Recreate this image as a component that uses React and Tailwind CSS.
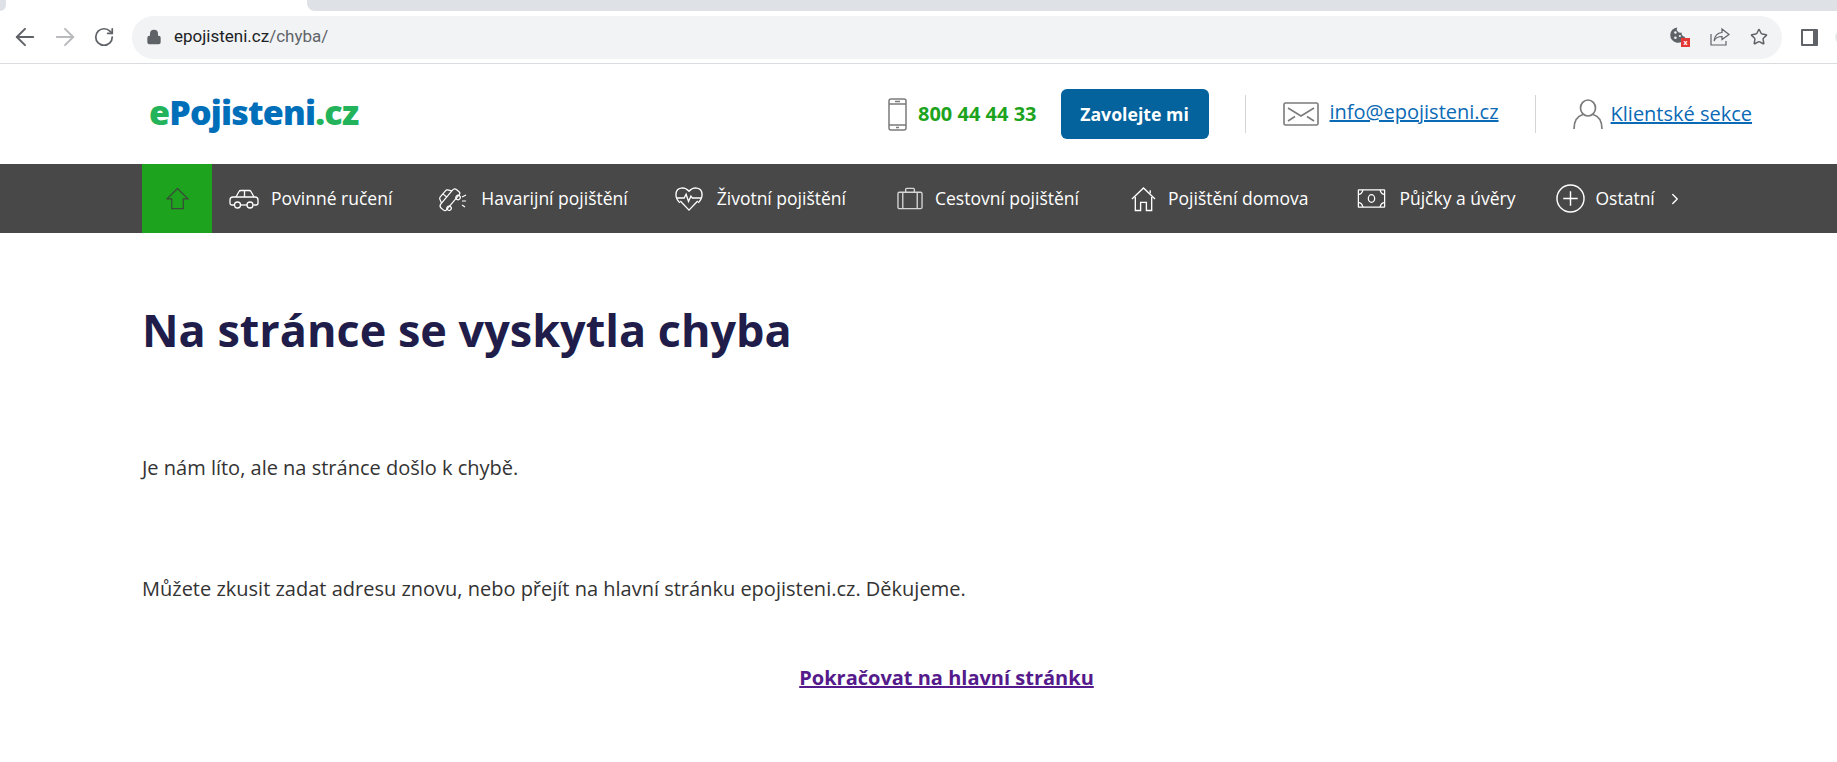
import { ArrowLeft, ArrowRight, ChevronRight, Lock, RotateCw, Star } from 'lucide-react'

const NAV_ITEMS = [
  { label: 'Povinné ručení', icon: CarIcon, margin: 'ml-[17px]', gap: 'ml-[12px]' },
  { label: 'Havarijní pojištění', icon: CrashIcon, margin: 'ml-[46px]', gap: 'ml-[14px]' },
  { label: 'Životní pojištění', icon: HeartIcon, margin: 'ml-[47px]', gap: 'ml-[14px]' },
  { label: 'Cestovní pojištění', icon: CaseIcon, margin: 'ml-[51px]', gap: 'ml-[12px]' },
  { label: 'Pojištění domova', icon: HouseIcon, margin: 'ml-[52px]', gap: 'ml-[12px]' },
  { label: 'Půjčky a úvěry', icon: MoneyIcon, margin: 'ml-[49px]', gap: 'ml-[13px]' },
  { label: 'Ostatní', icon: PlusIcon, margin: 'ml-[41px]', gap: 'ml-[10px]' },
]

function CarIcon() {
  return (
    <svg viewBox="0 0 30 20" className="h-[20px] w-[30px]" fill="none" stroke="currentColor" strokeWidth="1.3">
      <path d="M7 8 L10 2.5 Q10.5 1.5 12 1.5 H20 Q21.5 1.5 22 2.5 L25 8" />
      <path d="M15.5 1.5 V8" />
      <path d="M5.5 16 H3 Q1 16 1 14 V11 Q1 8 4 8 H26 Q29 8 29 11 V14 Q29 16 27 16 H24.5" />
      <path d="M12 16 H18" />
      <circle cx="8.5" cy="16" r="3" />
      <circle cx="21" cy="16" r="3" />
    </svg>
  )
}

function CrashIcon() {
  return (
    <svg viewBox="0 0 29 28" className="h-[28px] w-[29px]" fill="none" stroke="currentColor" strokeWidth="1.2">
      <g transform="rotate(-50 11 14)">
        <path d="M-1 14 Q-1 11 2 11 H20 Q23 11 23 14 V17 Q23 19 21 19 H1 Q-1 19 -1 17 Z" />
        <path d="M3 11 L5 7 Q5.5 6 7 6 H15 Q16.5 6 17 7 L19 11" />
        <path d="M11 6 V11" />
        <circle cx="4" cy="20" r="2.2" />
        <circle cx="18" cy="20" r="2.2" />
      </g>
      <path d="M24 12 L28 10 M24 16 H28 M24 20 L27 22" />
    </svg>
  )
}

function HeartIcon() {
  return (
    <svg viewBox="0 0 29 26" className="h-[26px] w-[28px]" fill="none" stroke="currentColor" strokeWidth="1.4">
      <path d="M5 17 Q1 13 1 8.5 Q1 2 7.5 1.5 Q11.5 1.5 14.5 5 Q17.5 1.5 21.5 1.5 Q28 2 28 8.5 Q28 13 24 17" />
      <path d="M5.5 15 L14.5 24.5 L23.5 15" />
      <path d="M2 12 H9.5 L11.5 8 L14 15.5 L16.5 10 L18 12 H27" />
    </svg>
  )
}

function CaseIcon() {
  return (
    <svg viewBox="0 0 27 23" className="h-[23px] w-[26px]" fill="none" stroke="#d6d6d6" strokeWidth="1.4">
      <rect x="1" y="5" width="25" height="17" rx="1.5" />
      <path d="M6 5 V22 M21 5 V22" />
      <path d="M9 5 V2 Q9 1 10 1 H17 Q18 1 18 2 V5" />
    </svg>
  )
}

function HouseIcon() {
  return (
    <svg viewBox="0 0 26 26" className="h-[26px] w-[25px]" fill="none" stroke="currentColor" strokeWidth="1.4">
      <path d="M1 13 L13 1.5 L25 13" />
      <path d="M20 4 V7" />
      <path d="M4.5 11 V25 H10 V16.5 H16 V25 H21.5 V11" />
    </svg>
  )
}

function MoneyIcon() {
  return (
    <svg viewBox="0 0 31 21" className="h-[19px] w-[29px]" fill="none" stroke="currentColor" strokeWidth="1.4">
      <rect x="1" y="1" width="29" height="19" rx="0.5" />
      <ellipse cx="15.5" cy="10.5" rx="3.5" ry="4.2" />
      <path d="M1 6 Q5 6 6 1 M30 6 Q26 6 25 1 M1 15 Q5 15 6 20 M30 15 Q26 15 25 20" />
    </svg>
  )
}

function PlusIcon() {
  return (
    <svg viewBox="0 0 30 30" className="h-[29px] w-[29px]" fill="none" stroke="currentColor" strokeWidth="1.5">
      <circle cx="15" cy="15" r="14" />
      <path d="M15 7.5 V22.5 M7.5 15 H22.5" />
    </svg>
  )
}

function HomeOutline() {
  return (
    <svg viewBox="0 0 24 24" className="h-[23px] w-[23px]" fill="none" stroke="#3a4a3a" strokeWidth="1.3">
      <path d="M12 1.5 L23 12.5 H18 V22.5 H6 V12.5 H1 Z" />
    </svg>
  )
}

function PhoneIcon() {
  return (
    <svg viewBox="0 0 19 33" className="h-[33px] w-[19px]" fill="none" stroke="#7b7b7b" strokeWidth="1.5">
      <rect x="1" y="1" width="17" height="31" rx="2" />
      <path d="M1 6 H18 M1 27 H18" />
      <path d="M7 3.5 H12 M8 29.5 H11" />
    </svg>
  )
}

function MailIcon() {
  return (
    <svg viewBox="0 0 36 24" className="h-[24px] w-[36px]" fill="none" stroke="#7b7b7b" strokeWidth="1.6">
      <rect x="1" y="1" width="34" height="22" rx="1.5" />
      <path d="M5 6 L18 14 L31 6" />
      <path d="M5 19 L12 14.5 M31 19 L24 14.5" />
    </svg>
  )
}

function UserIcon() {
  return (
    <svg viewBox="0 0 30 30" className="h-[30px] w-[30px]" fill="none" stroke="#7b7b7b" strokeWidth="1.7">
      <ellipse cx="15" cy="9" rx="7.5" ry="8" />
      <path d="M1 30 Q1 18 10 15.5 M29 30 Q29 18 20 15.5" />
    </svg>
  )
}

function CookieIcon() {
  return (
    <div className="relative h-[20px] w-[20px]">
      <svg viewBox="0 0 20 20" className="h-[18px] w-[18px]" fill="#5f6368">
        <path d="M8 0.5 A8.5 8.5 0 1 0 17 11 A4 4 0 0 1 13 6 A4 4 0 0 1 8 0.5 Z" />
        <circle cx="6" cy="6" r="1.4" fill="#f1f3f4" />
        <circle cx="6" cy="12" r="1.4" fill="#f1f3f4" />
        <circle cx="11" cy="10" r="1.2" fill="#f1f3f4" />
      </svg>
      <span className="absolute bottom-0 right-0 flex h-[9px] w-[9px] items-center justify-center bg-[#e53935] text-[7px] font-bold leading-none text-white">
        x
      </span>
    </div>
  )
}

function ShareIcon() {
  return (
    <svg viewBox="0 0 20 20" className="h-[20px] w-[20px]" fill="none" stroke="#5f6368" strokeWidth="1.2">
      <path d="M1 7 V18 H16 V14" />
      <path d="M12 2 L19 7.5 L12 12.5 V9.5 Q6 9.5 4 14 Q5 6 12 5.5 Z" />
    </svg>
  )
}

function BrowserBar() {
  return (
    <div className="h-[64px] w-full bg-white">
      <div className="flex h-[11px] w-full">
        <div className="h-full w-[6px] rounded-br-[6px] bg-[#dee1e6]" />
        <div className="ml-[301px] h-full flex-1 rounded-bl-[8px] bg-[#dee1e6]" />
      </div>
      <div className="flex h-[53px] items-center border-b-[1px] border-[#dadce0]">
        <ArrowLeft className="ml-[11px] h-[28px] w-[28px] shrink-0 text-[#5f6368]" strokeWidth={1.7} />
        <ArrowRight className="ml-[12px] h-[28px] w-[28px] shrink-0 text-[#b8babd]" strokeWidth={1.7} />
        <RotateCw className="ml-[14px] h-[22px] w-[22px] shrink-0 text-[#5f6368]" strokeWidth={1.9} />
        <div className="ml-[17px] flex h-[43px] w-[1650px] shrink-0 items-center rounded-full bg-[#f1f3f4] pl-[14px] pr-[14px]">
          <Lock className="h-[16px] w-[16px] fill-[#5f6368] text-[#5f6368]" strokeWidth={2} />
          <span className="ml-[12px] font-['Roboto',sans-serif] text-[17px] text-[#202124]">
            epojisteni.cz<span className="text-[#5f6368]">/chyba/</span>
          </span>
          <div className="ml-auto flex items-center gap-[20px]">
            <CookieIcon />
            <ShareIcon />
            <Star className="h-[18px] w-[18px] text-[#5f6368]" strokeWidth={2} />
          </div>
        </div>
        <div className="ml-[19px] h-[17px] w-[17px] shrink-0 rounded-[1px] bg-[#5f6368] p-[2px]">
          <div className="h-full w-[10px] bg-white" />
        </div>
        <div className="ml-[17px] h-[14px] w-[14px] shrink-0 rounded-full bg-[#e8e9eb]" />
      </div>
    </div>
  )
}

function SiteHeader() {
  return (
    <header className="flex h-[100px] items-center bg-white pl-[149px] font-['Open_Sans',sans-serif]">
      <a className="mb-[4px] w-[210px] shrink-0 whitespace-nowrap text-[34px] font-extrabold leading-none tracking-[-0.8px] text-[#006fba]">
        <span className="text-[#22b35b]">e</span>Pojisteni<span className="text-[#22b35b]">.cz</span>
      </a>
      <div className="ml-[529px] flex items-center">
        <PhoneIcon />
        <span className="ml-[11px] text-[20px] font-bold text-[#1da31d]">800 44 44 33</span>
      </div>
      <button
        type="button"
        className="ml-[24px] h-[50px] w-[148px] shrink-0 rounded-[6px] bg-[#04629d] text-[17.7px] font-bold text-white"
      >
        Zavolejte mi
      </button>
      <div className="ml-[36px] h-[38px] w-px shrink-0 bg-[#d5d5d5]" />
      <div className="ml-[37px] shrink-0">
        <MailIcon />
      </div>
      <a className="mb-[4px] ml-[11px] text-[20px] text-[#0b6ab5] underline">info@epojisteni.cz</a>
      <div className="ml-[36px] h-[38px] w-px shrink-0 bg-[#d5d5d5]" />
      <div className="ml-[37px] shrink-0">
        <UserIcon />
      </div>
      <a className="ml-[8px] text-[20px] text-[#0b6ab5] underline">Klientské sekce</a>
    </header>
  )
}

function MainNav() {
  return (
    <nav className="flex h-[69px] items-center bg-[#484848] pl-[142px] font-['Open_Sans',sans-serif] text-[17.5px] text-white">
      <div className="flex h-full w-[70px] items-center justify-center bg-[#1da31d]">
        <HomeOutline />
      </div>
      {NAV_ITEMS.map((item) => {
        const Icon = item.icon
        return (
          <a key={item.label} className={`flex items-center ${item.margin}`}>
            <Icon />
            <span className={item.gap}>{item.label}</span>
          </a>
        )
      })}
      <ChevronRight className="ml-[11px] h-[18px] w-[18px]" strokeWidth={1.8} />
    </nav>
  )
}

export default function App() {
  return (
    <div className="h-[762px] w-[1837px] overflow-hidden bg-white">
      <BrowserBar />
      <SiteHeader />
      <MainNav />
      <main className="w-[1751px] pl-[142px] font-['Open_Sans',sans-serif] text-[20px] text-[#333333]">
        <h1 className="mt-[66px] text-[45px] font-bold leading-[62px] text-[#201d4a]">Na stránce se vyskytla chyba</h1>
        <p className="mt-[93px] leading-[28px]">Je nám líto, ale na stránce došlo k chybě.</p>
        <p className="mt-[93px] leading-[28px]">
          Můžete zkusit zadat adresu znovu, nebo přejít na hlavní stránku epojisteni.cz. Děkujeme.
        </p>
        <p className="mt-[61px] text-center leading-[28px]">
          <a className="font-bold text-[#551a8b] underline">Pokračovat na hlavní stránku</a>
        </p>
      </main>
    </div>
  )
}
